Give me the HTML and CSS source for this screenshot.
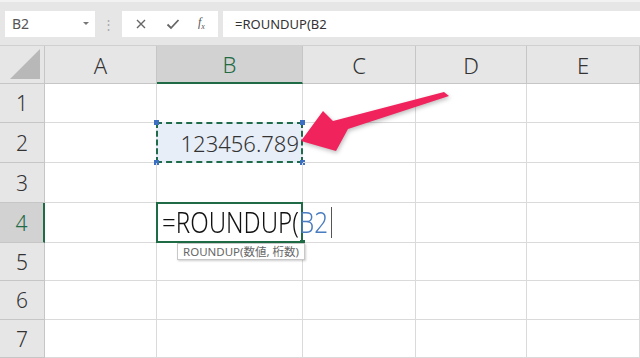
FILE: index.html
```html
<!DOCTYPE html>
<html>
<head>
  <title>ROUNDUP</title>
  <link rel="stylesheet" href="styles.css">
</head>
<body>
  <div class="app">
    <div class="toolbar">
      <div class="name-box">
        <span>B2</span>
        <span class="drop"></span>
      </div>
      <div class="grip">⋮</div>
      <div class="fx-buttons">
        <svg width="12" height="12" viewBox="0 0 12 12"><path d="M2 2 L10 10 M10 2 L2 10" stroke="#666" stroke-width="1.4" fill="none"/></svg>
        <svg width="14" height="12" viewBox="0 0 14 12"><path d="M1.5 6.5 L5 10 L12.5 2" stroke="#666" stroke-width="1.8" fill="none"/></svg>
        <span class="fx">f<sub>x</sub></span>
      </div>
      <div class="formula">=ROUNDUP(B2</div>
    </div>

    <div class="sheet">
      <div class="corner"><span class="tri"></span></div>
      <div class="col-h">A</div>
      <div class="col-h active">B</div>
      <div class="col-h">C</div>
      <div class="col-h">D</div>
      <div class="col-h">E</div>

      <div class="row-h">1</div>
      <div class="cell"></div><div class="cell"></div><div class="cell"></div><div class="cell"></div><div class="cell"></div>

      <div class="row-h">2</div>
      <div class="cell"></div>
      <div class="cell copied">
        123456.789
        <i class="h tl"></i><i class="h tr"></i><i class="h bl"></i><i class="h br"></i>
      </div>
      <div class="cell"></div><div class="cell"></div><div class="cell"></div>

      <div class="row-h">3</div>
      <div class="cell"></div><div class="cell"></div><div class="cell"></div><div class="cell"></div><div class="cell"></div>

      <div class="row-h active">4</div>
      <div class="cell"></div>
      <div class="cell editing">
        <span class="edit-text">=ROUNDUP(<span class="ref">B2</span></span>
        <span class="caret"></span>
        <i class="fill"></i>
        <div class="tip">ROUNDUP(数値, 桁数)</div>
      </div>
      <div class="cell"></div><div class="cell"></div><div class="cell"></div>

      <div class="row-h">5</div>
      <div class="cell"></div><div class="cell"></div><div class="cell"></div><div class="cell"></div><div class="cell"></div>

      <div class="row-h">6</div>
      <div class="cell"></div><div class="cell"></div><div class="cell"></div><div class="cell"></div><div class="cell"></div>

      <div class="row-h">7</div>
      <div class="cell"></div><div class="cell"></div><div class="cell"></div><div class="cell"></div><div class="cell"></div>
    </div>

    <svg class="arrow" width="640" height="358" viewBox="0 0 640 358">
      <polygon points="301,141 323,111 333,121 444,92 449,96 348,129 336,151" fill="#f1235d"/>
    </svg>
  </div>
</body>
</html>
```

FILE: styles.css
```css
body {
  margin: 0;
  padding: 0;
  font-family: "Noto Sans", "Noto Sans CJK JP", sans-serif;
  background: #fff;
}
.app {
  position: relative;
  width: 640px;
  height: 358px;
  overflow: hidden;
}
.toolbar {
  display: flex;
  align-items: center;
  height: 46px;
  padding-left: 5px;
  background: #e6e6e6;
  border-top: 2px solid #f2f2f2;
  box-sizing: border-box;
  border-bottom: 1px solid #d0d0d0;
}
.name-box {
  display: flex;
  align-items: center;
  justify-content: space-between;
  width: 90px;
  height: 26px;
  padding: 0 6px 0 7px;
  box-sizing: border-box;
  background: #fff;
  font-size: 14px;
  color: #555;
}
.drop {
  width: 0;
  height: 0;
  border-left: 3px solid transparent;
  border-right: 3px solid transparent;
  border-top: 3px solid #777;
}
.grip {
  width: 27px;
  text-align: center;
  color: #aaa;
  font-size: 13px;
}
.fx-buttons {
  display: flex;
  align-items: center;
  justify-content: space-around;
  width: 96px;
  height: 26px;
  background: #fff;
  padding: 0 4px;
  box-sizing: border-box;
}
.fx {
  font-family: "Liberation Serif", serif;
  font-style: italic;
  font-size: 12px;
  color: #555;
}
.fx sub {
  font-size: 8px;
}
.formula {
  flex: 1;
  height: 26px;
  margin-left: 5px;
  padding-left: 12px;
  background: #fff;
  font-size: 13px;
  line-height: 26px;
  color: #333;
}
.sheet {
  display: grid;
  grid-template-columns: 45px 112px 146px 113px 111px 113px;
  grid-template-rows: 38px 39px 40px 40px 40px 38px 39px 38px;
}
.corner {
  position: relative;
  background: #e6e6e6;
  border-right: 1px solid #c6c6c6;
  border-bottom: 1px solid #c6c6c6;
}
.tri {
  position: absolute;
  right: 4px;
  bottom: 4px;
  width: 0;
  height: 0;
  border-left: 30px solid transparent;
  border-bottom: 30px solid #b8b8b8;
}
.col-h {
  display: flex;
  align-items: center;
  justify-content: center;
  background: #e6e6e6;
  border-right: 1px solid #c6c6c6;
  border-bottom: 1px solid #c6c6c6;
  font-size: 22px;
  font-weight: 300;
  color: #333;
}
.col-h.active {
  background: #d2d2d2;
  color: #1e6b45;
  border-bottom: 2px solid #1e6b45;
}
.row-h {
  display: flex;
  align-items: center;
  justify-content: center;
  background: #e6e6e6;
  border-right: 1px solid #c6c6c6;
  border-bottom: 1px solid #c6c6c6;
  font-size: 21px;
  font-weight: 300;
  color: #333;
}
.row-h.active {
  background: #d2d2d2;
  color: #1e6b45;
  border-right: 2px solid #1e6b45;
}
.cell {
  position: relative;
  border-right: 1px solid #dadada;
  border-bottom: 1px solid #dadada;
}
.copied {
  display: flex;
  align-items: center;
  justify-content: flex-end;
  margin: -1px 0 0 -1px;
  padding-right: 2px;
  border: 2px dashed #1f6b4a;
  background: #e8eef8;
  font-size: 22px;
  font-weight: 300;
  color: #333;
}
.h {
  position: absolute;
  width: 5px;
  height: 5px;
  background: #3d6fc2;
}
.tl { left: -4px; top: -4px; }
.tr { right: -4px; top: -4px; }
.bl { left: -4px; bottom: -4px; }
.br { right: -4px; bottom: -4px; }
.editing {
  margin: -1px 0 0 -1px;
  border: 2px solid #1e6b45;
  z-index: 1;
}
.edit-text {
  position: absolute;
  left: 4px;
  top: 0;
  white-space: nowrap;
  font-size: 29px;
  font-weight: 300;
  color: #111;
  line-height: 36px;
  transform: scaleX(0.83);
  transform-origin: left center;
}
.ref {
  color: #4a7cc0;
}
.caret {
  position: absolute;
  left: 173px;
  top: 3px;
  width: 1px;
  height: 31px;
  background: #555;
}
.fill {
  position: absolute;
  right: -4px;
  bottom: -4px;
  width: 5px;
  height: 5px;
  background: #1e6b45;
}
.tip {
  position: absolute;
  left: 19px;
  top: 39px;
  padding: 0 5px;
  background: #fff;
  border: 1px solid #c8c8c8;
  box-shadow: 1px 1px 2px rgba(0, 0, 0, 0.2);
  font-size: 11.5px;
  line-height: 15px;
  color: #666;
  white-space: nowrap;
}
.arrow {
  position: absolute;
  left: 0;
  top: 0;
  filter: drop-shadow(1px 2px 2px rgba(0, 0, 0, 0.25));
}
```
